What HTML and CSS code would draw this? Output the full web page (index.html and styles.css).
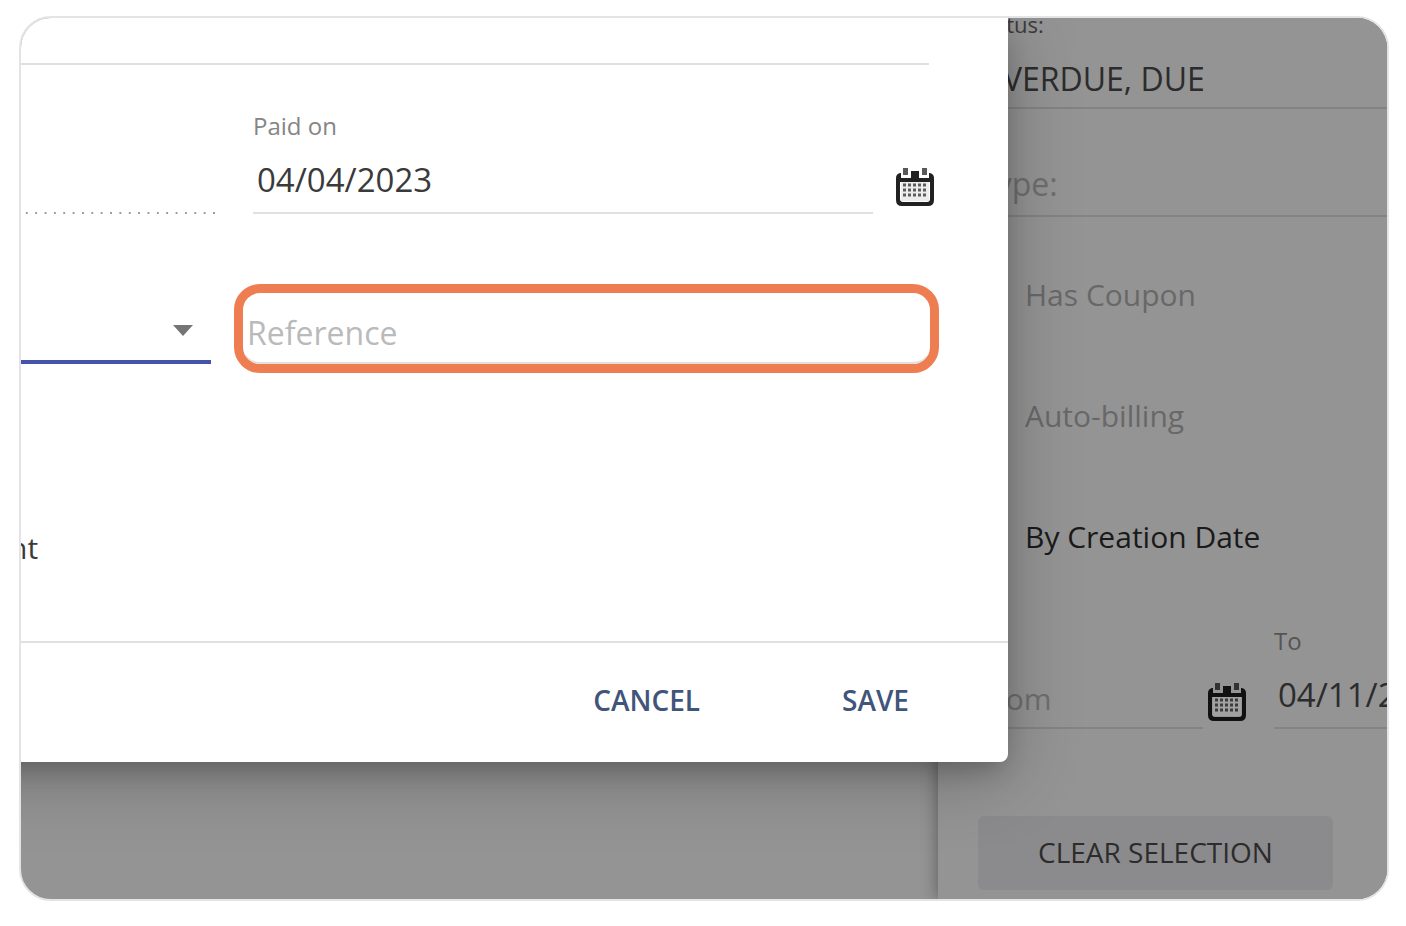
FILE: index.html
```html
<!DOCTYPE html>
<html lang="en">
<head>
  <meta charset="UTF-8">
  <meta name="viewport" content="width=device-width, initial-scale=1">
  <title>Record payment</title>
  <link rel="stylesheet" href="styles.css">
</head>

<body>

<!-- Calendar icon, shared by the date fields -->
<svg class="sprite" aria-hidden="true">
  <symbol id="calendar" viewBox="0 0 38 38">
    <path fill="#c4c4c4" opacity="0.3" d="M5 12h28v21H5z"/>
    <path fill="currentColor" d="M4 5h1v7h28V5h1q4 1 4 5v22q0 6-6 6H6q-6 0-6-6V10q0-4 4-5zM4 14v17q0 3 3 3h24q3 0 3-3V14z"/>
    <path fill="currentColor" d="M3 10h32v2H3zM15 3h8v9h-8z"/>
    <path fill="currentColor" opacity="0.75" d="M7 0h5v7H7zM26 0h5v7h-5z"/>
    <path stroke="currentColor" stroke-width="3" stroke-dasharray="3 2" opacity="0.7" d="M7 17h25M7 22h25M7 27h25"/>
  </symbol>
</svg>

<div class="frame">

  <!-- Filters -->
  <aside class="filters">
    <label class="field-label status-label" for="status">Status:</label>
    <input class="field status" id="status" type="text" value="OVERDUE, DUE">

    <input class="field type" type="text" placeholder="Type:" aria-label="Type">

    <div class="checks">
      <label class="check muted"><input type="checkbox">Has Coupon</label>
      <label class="check muted"><input type="checkbox">Auto-billing</label>
      <label class="check"><input type="checkbox" checked>By Creation Date</label>
    </div>

    <div class="dates">
      <input class="field from" type="text" placeholder="From" aria-label="From">
      <button class="calendar-btn" type="button" aria-label="Pick from date"><svg><use href="#calendar"/></svg></button>
      <div class="to">
        <label class="field-label" for="to-date">To</label>
        <input class="field date" id="to-date" type="text" value="04/11/2023">
      </div>
    </div>

    <button class="clear-btn" type="button">CLEAR SELECTION</button>
  </aside>

  <!-- Payment dialog -->
  <form class="dialog">
    <div class="dialog-header"></div>

    <div class="row paid-row">
      <input class="field disabled" type="text" aria-label="Amount" disabled>
      <div class="paid-on">
        <label class="field-label" for="paid-on">Paid on</label>
        <input class="field date" id="paid-on" type="text" value="04/04/2023">
      </div>
      <button class="calendar-btn" type="button" aria-label="Pick payment date"><svg><use href="#calendar"/></svg></button>
    </div>

    <div class="row reference-row">
      <div class="select-wrap">
        <select class="field method" aria-label="Payment method"><option></option></select>
        <svg class="caret" viewBox="0 0 20 11" aria-hidden="true"><path fill="#757575" d="M0 0h20L10 11z"/></svg>
      </div>
      <div class="highlight">
        <input class="field reference" type="text" placeholder="Reference" aria-label="Reference">
      </div>
    </div>

    <div class="note">nt</div>

    <div class="dialog-actions">
      <button class="action-btn" type="button">CANCEL</button>
      <button class="action-btn" type="button">SAVE</button>
    </div>
  </form>

</div>

</body>
</html>
```
FILE: styles.css
```css
* {
  box-sizing: border-box;
}
body {
  margin: 0;
  padding: 16px 17px 24px 19px;
  background-color: white;
  font-family: 'Open Sans', 'Noto Sans', sans-serif;
  color: #3a3a3a;
}
input, select, button {
  font-family: inherit;
  color: inherit;
}
button {
  border: none;
  background: none;
  cursor: pointer;
}
.sprite {
  display: none;
}
.frame {
  position: relative;
  display: flex;
  justify-content: flex-end;
  overflow: hidden;
  border: 2px solid #e4e4e8;
  border-radius: 32px;
  background-color: #949494;
}

/* Fields */
.field {
  display: block;
  width: 100%;
  min-width: 0;
  height: 66px;
  padding: 0;
  border: none;
  border-bottom: 2px solid #e0e0e0;
  border-radius: 0;
  outline: none;
  background: transparent;
  font-size: 32px;
}
.field::placeholder {
  color: #bababa;
  opacity: 1;
}
.field-label {
  display: block;
  font-size: 24px;
  line-height: 32px;
  color: #858585;
}
.date {
  margin-top: 6px;
  padding: 0 0 2px 4px;
  font-size: 33px;
}
.calendar-btn {
  flex: none;
  width: 38px;
  height: 38px;
  margin-bottom: 8px;
  padding: 0;
  color: #212121;
}
.calendar-btn svg {
  display: block;
  width: 38px;
  height: 38px;
}

/* Filters */
.filters {
  width: 449px;
  padding: 0 0 9px 40px;
  background-color: #949494;
  box-shadow: 0 0 16px rgba(0,0,0,0.4);
  color: #2c2c2c;
}
.filters .field {
  border-bottom-color: #838383;
}
.filters .field::placeholder {
  color: #6e6e6e;
}
.filters .field-label {
  color: #555;
}
.filters .status-label {
  margin: -10px 0 9px -4px;
  font-size: 22px;
  color: #3c3c3c;
}
.status, .from {
  height: 60px;
}
.type {
  margin-top: 42px;
}
.checks {
  display: flex;
  flex-direction: column;
  gap: 81px;
  margin-top: 58px;
}
.check {
  display: flex;
  align-items: center;
  gap: 17px;
  font-size: 30px;
  line-height: 40px;
  color: #1a1a1a;
}
.check input {
  width: 30px;
  height: 30px;
  margin: 0;
}
.check.muted {
  color: #686868;
}
.dates {
  display: flex;
  align-items: flex-end;
  margin-top: 68px;
}
.dates .from {
  flex: none;
  width: 225px;
  font-size: 30px;
}
.dates .calendar-btn {
  margin-left: 5px;
  margin-right: 28px;
  color: #111;
}
.to {
  flex: 1;
  min-width: 0;
}
.clear-btn {
  height: 74px;
  margin-top: 87px;
  padding: 0 60px 2px;
  border-radius: 6px;
  background-color: #8b8b8d;
  font-size: 28px;
}

/* Dialog */
.dialog {
  position: absolute;
  top: 0;
  left: -112px;
  right: 379px;
  padding-left: 100px;
  border-radius: 0 0 8px 8px;
  background-color: white;
  box-shadow: 0 12px 24px -6px rgba(0,0,0,0.22), 0 14px 70px rgba(0,0,0,0.25);
}
.dialog-header {
  height: 47px;
  margin-right: 79px;
  border-bottom: 2px solid #e0e0e0;
}
.row {
  display: flex;
}
.paid-row {
  align-items: flex-end;
  margin-top: 45px;
  padding-right: 74px;
}
.disabled {
  flex: none;
  width: 206px;
  margin-right: 38px;
  border-bottom: none;
  background: linear-gradient(90deg, transparent calc(100% - 2px), #9a9a9a 0) left bottom / calc(100% / 22) 2px repeat-x;
}
.paid-on {
  flex: 1;
}
.paid-row .calendar-btn {
  margin-left: 23px;
}
.reference-row {
  gap: 23px;
  align-items: flex-start;
  margin-top: 70px;
  padding-right: 69px;
}
.select-wrap {
  display: grid;
  flex: none;
  align-items: center;
  width: 202px;
  margin-top: 14px;
}
.select-wrap > * {
  grid-area: 1 / 1;
}
.method {
  appearance: none;
  border-bottom: 4px solid #4553ab;
}
.caret {
  justify-self: end;
  width: 20px;
  height: 11px;
  margin: 0 18px 2px 0;
  pointer-events: none;
}
.highlight {
  flex: 1;
  border: 9px solid #ee7e52;
  border-radius: 26px;
}
.reference {
  height: 71px;
  padding: 10px 0 0 4px;
  border-radius: 0 0 17px 17px;
}
.note {
  margin-top: 155px;
  font-size: 30px;
  line-height: 40px;
}
.dialog-actions {
  display: flex;
  justify-content: flex-end;
  gap: 78px;
  margin-top: 73px;
  padding: 21px 67px 26px 0;
  border-top: 2px solid #e0e0e0;
}
.action-btn {
  height: 72px;
  padding: 0 32px;
  font-size: 28px;
  font-weight: 600;
  color: #41547a;
}
```
